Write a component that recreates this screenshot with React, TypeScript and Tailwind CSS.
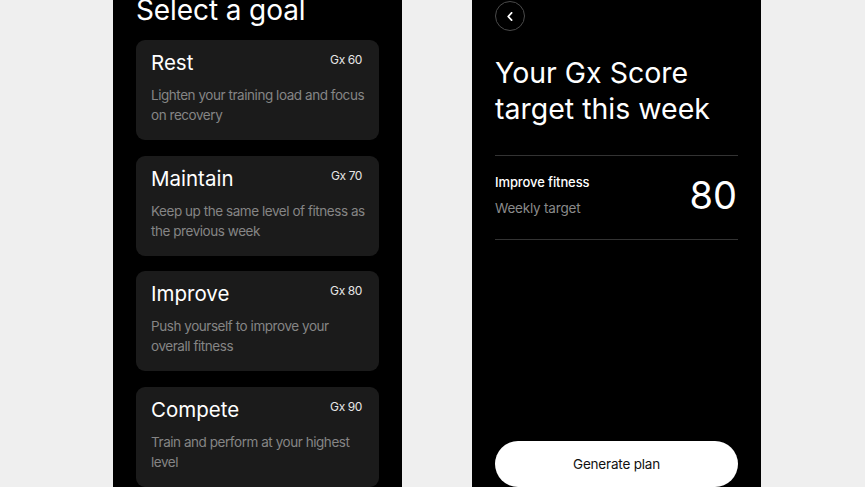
// ─── Goal selection + weekly target ──────────────────────────────────────────
const GOALS = [
  { title: 'Rest', score: 60, desc: ['Lighten your training load and focus', 'on recovery'] },
  { title: 'Maintain', score: 70, desc: ['Keep up the same level of fitness as', 'the previous week'] },
  { title: 'Improve', score: 80, desc: ['Push yourself to improve your', 'overall fitness'] },
  { title: 'Compete', score: 90, desc: ['Train and perform at your highest', 'level'] },
]

export default function App() {
  return (
    <div
      className="h-[487px] w-full overflow-hidden bg-[#efefef] pl-[113px] flex gap-[70px]"
      style={{ fontFamily: 'Inter, "Noto Sans", sans-serif' }}
    >
      {/* Select a goal */}
      <div className="w-[289px] h-[487px] shrink-0 overflow-hidden bg-black px-[23px] text-white">
        <h1 className="mt-[-7px] mb-[13px] text-[28px] leading-[34px] font-normal tracking-[-0.1px]">
          Select a goal
        </h1>
        <div className="flex flex-col gap-[15.5px]">
          {GOALS.map((g) => (
            <GoalCard key={g.title} {...g} />
          ))}
        </div>
      </div>

      {/* Weekly target */}
      <div className="w-[289px] h-[487px] shrink-0 overflow-hidden bg-black px-[23px] text-white flex flex-col">
        <button className="mt-[1px] w-[30px] h-[30px] rounded-full border border-[#4a4a4a] flex items-center justify-center">
          <svg width="6" height="9" viewBox="0 0 6 9" fill="none">
            <polyline
              points="4.6,0.8 1.2,4.5 4.6,8.2"
              stroke="white"
              strokeWidth="1.8"
              strokeLinecap="round"
              strokeLinejoin="round"
            />
          </svg>
        </button>

        <h2 className="mt-[24px] text-[28.5px] leading-[36px] font-normal tracking-[0px]">
          Your Gx Score
          <br />
          target this week
        </h2>

        <div className="mt-[28px] border-t border-b border-[#333333] pt-[17px] pb-[22px] flex items-center justify-between">
          <div>
            <p className="text-[13px] leading-[18px] font-medium text-white tracking-[-0.1px]">Improve fitness</p>
            <p className="mt-[8px] text-[13.5px] leading-[18px] text-[#8a8a8a] tracking-[-0.2px]">Weekly target</p>
          </div>
          <span className="text-[38px] leading-[44px] font-normal mr-[1px]">80</span>
        </div>

        <button className="mt-auto h-[46px] w-full rounded-full bg-white text-[#111111] text-[13.5px] tracking-[-0.2px] font-normal">
          Generate plan
        </button>
      </div>
    </div>
  )
}

function GoalCard({ title, score, desc }: { title: string; score: number; desc: string[] }) {
  return (
    <div className="h-[100px] rounded-[9px] bg-[#1b1b1b] pl-[15px] pr-[17px] pt-[9px]">
      <div className="flex items-start justify-between">
        <h3 className="text-[20.5px] leading-[28px] font-normal text-white">{title}</h3>
        <span className="mt-[3px] text-[12px] leading-[16px] tracking-[-0.4px] text-[#e6e6e6]">
          Gx {score}
        </span>
      </div>
      <p className="mt-[8px] whitespace-nowrap text-[13.5px] leading-[20px] text-[#858585] tracking-[-0.45px]">
        {desc[0]}
        <br />
        {desc[1]}
      </p>
    </div>
  )
}
